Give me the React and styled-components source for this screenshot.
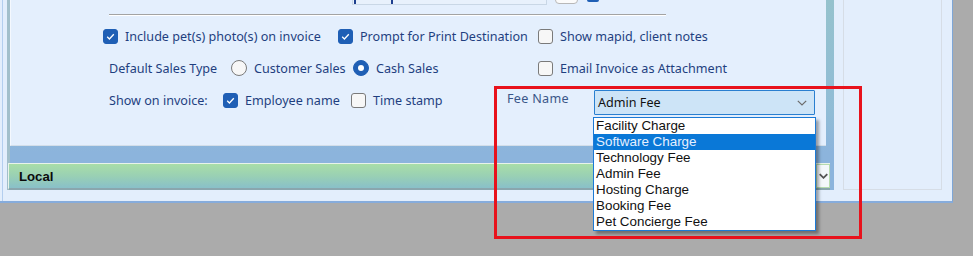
import React from "react";
import styled, { createGlobalStyle } from "styled-components";

const Global = createGlobalStyle`
  html, body { margin: 0; padding: 0; background: #ababab; }
  body { font-family: "Noto Sans", "Open Sans", sans-serif; }
  * { box-sizing: border-box; }
`;

const Page = styled.div`
  position: relative;
  width: 973px;
  height: 256px;
  background: #ababab;
  overflow: hidden;
`;

const Window = styled.div`
  display: flex;
  width: 953px;
  height: 203px;
  padding-left: 7px;
  background: linear-gradient(to right, #e3eefc 2px, #b3ceef 2px, #b3ceef 3px, #e3eefc 3px);
  border-right: 1px solid #7ea6d6;
  border-bottom: 2px solid #86acdc;
`;

const MainFrame = styled.div`
  width: 827px;
  height: 190px;
  display: flex;
  flex-direction: column;
  border-left: 3px solid #a2bfcb;
  background: linear-gradient(to bottom, #95c2cd 0%, #90bcd6 60%, #8cb4dc 80%);
`;

const Panel = styled.div`
  position: relative;
  height: 146px;
  margin-right: 8px;
  background: #e4effd;
  border-bottom: 1px solid #d3dee9;
  border-left: 1px solid #f4f8fe;
`;

const TopStrip = styled.div`
  display: flex;
  align-items: flex-start;
  height: 14px;
  padding-left: 341px;
  overflow: hidden;
`;

const CutInput = styled.div`
  width: 195px;
  height: 22px;
  margin-top: -17px;
  background: #e8f1fc;
  border: 1px solid #c9d7e6;
  position: relative;
`;

const CutButton = styled.div`
  width: 23px;
  height: 22px;
  margin: -18px 0 0 8px;
  background: #fbfbfb;
  border: 1px solid #b8b8b8;
  border-radius: 4px;
`;

const CutCheck = styled.div`
  width: 12px;
  height: 13px;
  margin: -11px 0 0 9px;
  background: #1f5fb5;
  border-radius: 2px;
`;

const Glyph = styled.span`
  position: absolute;
  bottom: 0px;
  left: ${p => p.$x}px;
  width: 2px;
  height: 4px;
  background: #1e3f8e;
`;

const Rule = styled.div`
  margin-left: 98px;
  width: 557px;
  height: 2px;
  border-top: 1px solid #a3a3a3;
  border-bottom: 1px solid #ffffff;
`;

const Rows = styled.div`
  margin-top: 4px;
  display: flex;
  flex-direction: column;
`;

const Row = styled.div`
  display: flex;
  align-items: center;
  height: 32px;
  padding-left: ${p => p.$pad}px;
  font-size: 12.6px;
  color: #1f3f80;
`;

const Cell = styled.div`
  display: flex;
  align-items: center;
  gap: 7px;
  width: ${p => (p.$w ? `${p.$w}px` : "auto")};
  flex: none;
  white-space: nowrap;
`;

const Box = styled.span`
  display: inline-flex;
  align-items: center;
  justify-content: center;
  width: 15px;
  height: 15px;
  border-radius: 3px;
  flex: none;
  background: ${p => (p.$on ? "#1f5fb5" : "#f7f7f7")};
  border: 1px solid ${p => (p.$on ? "#1f5fb5" : "#7a7a7a")};
`;

const Radio = styled.span`
  display: inline-flex;
  align-items: center;
  justify-content: center;
  width: 16px;
  height: 16px;
  border-radius: 50%;
  flex: none;
  background: ${p => (p.$on ? "#1f5fb5" : "#f7f7f7")};
  border: 1px solid ${p => (p.$on ? "#1f5fb5" : "#7a7a7a")};
  &::after {
    content: "";
    display: ${p => (p.$on ? "block" : "none")};
    width: 6px;
    height: 6px;
    border-radius: 50%;
    background: #ffffff;
  }
`;

const Check = () => (
  <svg width="11" height="11" viewBox="0 0 11 11">
    <path d="M2.2 5.8 L4.4 8 L8.8 3.2" fill="none" stroke="#ffffff" strokeWidth="1.3" />
  </svg>
);

const CheckItem = ({ on, label, w }) => (
  <Cell $w={w}>
    <Box $on={on}>{on && <Check />}</Box>
    <span>{label}</span>
  </Cell>
);

const RadioItem = ({ on, label, w }) => (
  <Cell $w={w}>
    <Radio $on={on} />
    <span>{label}</span>
  </Cell>
);

const FeeLabel = styled.div`
  width: 85px;
  flex: none;
  color: #3a5688;
  align-self: flex-start;
  margin-top: 6px;
  padding-left: 0;
  margin-left: -2px;
  letter-spacing: 0.3px;
`;

const ComboWrap = styled.div`
  position: relative;
  align-self: flex-start;
  margin-top: 6px;
  margin-left: 2px;
`;

const Combo = styled.div`
  display: flex;
  align-items: center;
  justify-content: space-between;
  width: 221px;
  height: 25px;
  padding: 0 7px 0 3px;
  background: #cde4f7;
  border: 1px solid #2a7fd0;
  border-radius: 1px;
  color: #111;
  font-size: 12.6px;
`;

const DropList = styled.ul`
  position: absolute;
  top: 27px;
  left: -1px;
  width: 223px;
  margin: 0;
  padding: 0;
  list-style: none;
  background: #ffffff;
  border: 1px solid #1c7ad6;
  box-shadow: 3px 3px 3px rgba(0, 0, 0, 0.35);
  z-index: 2;
`;

const DropItem = styled.li`
  height: 16px;
  line-height: 16px;
  padding-left: 2px;
  font-family: "Liberation Sans", Arial, sans-serif;
  font-size: 13.4px;
  color: ${p => (p.$sel ? "#e6f0ff" : "#111")};
  background: ${p => (p.$sel ? "#0a78d7" : "transparent")};
  white-space: nowrap;
`;

const GreenBar = styled.div`
  display: flex;
  align-items: center;
  justify-content: space-between;
  height: 27px;
  margin: 17px 4px 0 -2px;
  padding-left: 10px;
  background: linear-gradient(to bottom, #a9dea7 0%, #99d0b4 50%, #89c0c9 100%);
  border-top: 1px solid #e8f3ea;
  border-left: 1px solid #e8f3ea;
  border-bottom: 2px solid #8aa6ae;
  font-family: "Liberation Sans", Arial, sans-serif;
  font-weight: bold;
  font-size: 13.2px;
  color: #0b0b0b;
`;

const BarArrow = styled.div`
  display: flex;
  align-items: center;
  justify-content: center;
  width: 14px;
  height: 24px;
  background: #f4f8fb;
  border: 1px solid #b6dbb0;
`;

const RightPane = styled.div`
  flex: 1;
  padding: 0 10px 0 9px;
`;

const RightBox = styled.div`
  height: 190px;
  border: 1px solid #d6dde6;
  border-top: none;
  background: #e3eefc;
`;

const Annotation = styled.div`
  position: absolute;
  left: 494px;
  top: 86px;
  width: 368px;
  height: 153px;
  border: 3px solid #e8121c;
  pointer-events: none;
  z-index: 3;
`;

const Chevron = ({ color = "#6b6b6b", w = 10, sw = 1.2 }) => (
  <svg width={w} height="6" viewBox="0 0 10 6">
    <path d="M0.8 0.8 L5 5 L9.2 0.8" fill="none" stroke={color} strokeWidth={sw} />
  </svg>
);

const fees = [
  "Facility Charge",
  "Software Charge",
  "Technology Fee",
  "Admin Fee",
  "Hosting Charge",
  "Booking Fee",
  "Pet Concierge Fee",
];

export default function App() {
  return (
    <Page>
      <Global />
      <Window>
        <MainFrame>
          <Panel>
            <TopStrip>
              <CutInput>
                <Glyph $x={1} />
                <Glyph $x={38} />
              </CutInput>
              <CutButton />
              <CutCheck />
            </TopStrip>
            <Rule />
            <Rows>
              <Row $pad={92}>
                <CheckItem on w={235} label="Include pet(s) photo(s) on invoice" />
                <CheckItem on w={200} label="Prompt for Print Destination" />
                <CheckItem label="Show mapid, client notes" />
              </Row>
              <Row $pad={98}>
                <Cell $w={122}>Default Sales Type</Cell>
                <RadioItem w={122} label="Customer Sales" />
                <RadioItem on w={185} label="Cash Sales" />
                <CheckItem label="Email Invoice as Attachment" />
              </Row>
              <Row $pad={98}>
                <Cell $w={114}>Show on invoice:</Cell>
                <CheckItem on w={128} label="Employee name" />
                <CheckItem w={158} label="Time stamp" />
                <FeeLabel>Fee Name</FeeLabel>
                <ComboWrap>
                  <Combo>
                    <span>Admin Fee</span>
                    <Chevron />
                  </Combo>
                  <DropList>
                    {fees.map(f => (
                      <DropItem key={f} $sel={f === "Software Charge"}>
                        {f}
                      </DropItem>
                    ))}
                  </DropList>
                </ComboWrap>
              </Row>
            </Rows>
          </Panel>
          <GreenBar>
            <span>Local</span>
            <BarArrow>
              <Chevron color="#555" w={9} sw={2} />
            </BarArrow>
          </GreenBar>
        </MainFrame>
        <RightPane>
          <RightBox />
        </RightPane>
      </Window>
      <Annotation />
    </Page>
  );
}
